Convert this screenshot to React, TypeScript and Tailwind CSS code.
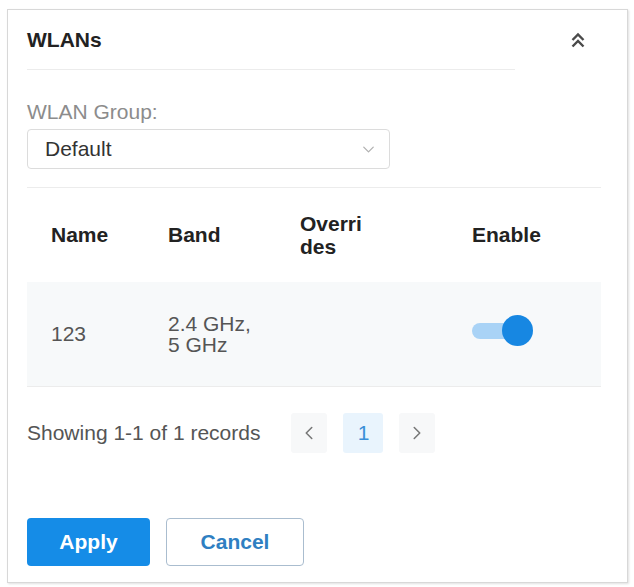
import React, { useState } from "react";
import { ChevronDown, ChevronLeft, ChevronRight } from "lucide-react";

type IWlan = { id: number; name: string; band: string; overrides: string; enabled: boolean };

const wlans: IWlan[] = [{ id: 1, name: "123", band: "2.4 GHz, 5 GHz", overrides: "", enabled: true }];

const Toggle: React.FC<{ on: boolean; onChange: () => void }> = ({ on, onChange }) => (
  <button onClick={onChange} className="relative w-[61px] h-[31px] shrink-0">
    <span
      className={`absolute left-0 top-[8px] w-[46px] h-[16px] rounded-full ${on ? "bg-[#a9d3f6]" : "bg-[#d5d9dd]"}`}
    />
    <span
      className={`absolute top-0 w-[31px] h-[31px] rounded-full ${on ? "right-0 bg-[#1787e2]" : "left-0 bg-white border border-[#ccc]"}`}
    />
  </button>
);

const App: React.FC = () => {
  const [rows, setRows] = useState(wlans);

  const handleToggle = (id: number) => {
    setRows(rows.map((r) => (r.id === id ? { ...r, enabled: !r.enabled } : r)));
  };

  return (
    <div className="min-h-screen bg-white pt-[9px] pl-[7px] font-['Liberation_Sans',Arial,sans-serif] text-[21px]">
      <div className="w-[621px] h-[574px] border border-[#d8d8d8] shadow-[1px_1px_2px_rgba(0,0,0,0.12)] pl-[19px] pr-[26px] pt-[18px]">
        <div className="flex items-center justify-between h-[24px]">
          <h2 className="font-bold text-[#222] leading-[24px]">WLANs</h2>
          {/* collapse */}
          <svg width="14" height="16" viewBox="0 0 14 16" className="mr-[16px] text-[#4a4a4a]">
            <polyline points="1.5,8 7,2.5 12.5,8" fill="none" stroke="currentColor" strokeWidth="2.4" />
            <polyline points="1.5,14.5 7,9 12.5,14.5" fill="none" stroke="currentColor" strokeWidth="2.4" />
          </svg>
        </div>
        <div className="mt-[17px] h-px w-[488px] bg-[#ececec]" />

        <p className="mt-[30px] leading-[24px] text-[#8c8c8c]">WLAN Group:</p>
        <div className="mt-[5px] h-[40px] w-[363px] border border-[#dcdcdc] rounded-[4px] flex items-center justify-between pl-[17px] pr-[11px]">
          <span className="text-[#333]">Default</span>
          <ChevronDown size={19} strokeWidth={1.6} className="text-[#b0b0b0]" />
        </div>

        <div className="mt-[18px] h-px bg-[#ececec]" />

        <div className="grid grid-cols-[117px_132px_172px_1fr] h-[94px] items-center font-bold text-[#222]">
          <div className="pl-6">Name</div>
          <div className="pl-6">Band</div>
          <div className="pl-6">
            <span className="block w-[66px] break-all leading-[23px]">Overrides</span>
          </div>
          <div className="pl-6">Enable</div>
        </div>

        {rows.map((row) => (
          <div
            key={row.id}
            className="grid grid-cols-[117px_132px_172px_1fr] h-[104px] items-center bg-[#f7f9fa] text-[#555]"
          >
            <div className="pl-6">{row.name}</div>
            <div className="pl-6">
              <span className="block w-[88px] leading-[21px]">{row.band}</span>
            </div>
            <div className="pl-6">{row.overrides}</div>
            <div className="pl-6 pt-[2px]">
              <Toggle on={row.enabled} onChange={() => handleToggle(row.id)} />
            </div>
          </div>
        ))}
        <div className="h-px bg-[#ececec]" />

        <div className="mt-[26px] h-[40px] flex items-center">
          <span className="text-[#555]">Showing 1-1 of 1 records</span>
          <div className="ml-[31px] flex items-center gap-[16px]">
            <button className="w-[36px] h-[40px] rounded-[3px] bg-[#f7f8f9] flex items-center justify-center">
              <ChevronLeft size={22} strokeWidth={1.7} className="text-[#777]" />
            </button>
            <button className="w-[40px] h-[40px] rounded-[3px] bg-[#e9f4fd] text-[#3a8fd8] flex items-center justify-center">
              1
            </button>
            <button className="w-[36px] h-[40px] rounded-[3px] bg-[#f7f8f9] flex items-center justify-center">
              <ChevronRight size={22} strokeWidth={1.7} className="text-[#777]" />
            </button>
          </div>
        </div>

        <div className="mt-[65px] flex gap-[16px]">
          <button className="w-[123px] h-[48px] rounded-[4px] bg-[#158ce7] text-white font-bold">
            Apply
          </button>
          <button className="w-[138px] h-[48px] rounded-[4px] border border-[#aabdcf] bg-white text-[#2f7fc2] font-bold">
            Cancel
          </button>
        </div>
      </div>
    </div>
  );
};

export default App;
